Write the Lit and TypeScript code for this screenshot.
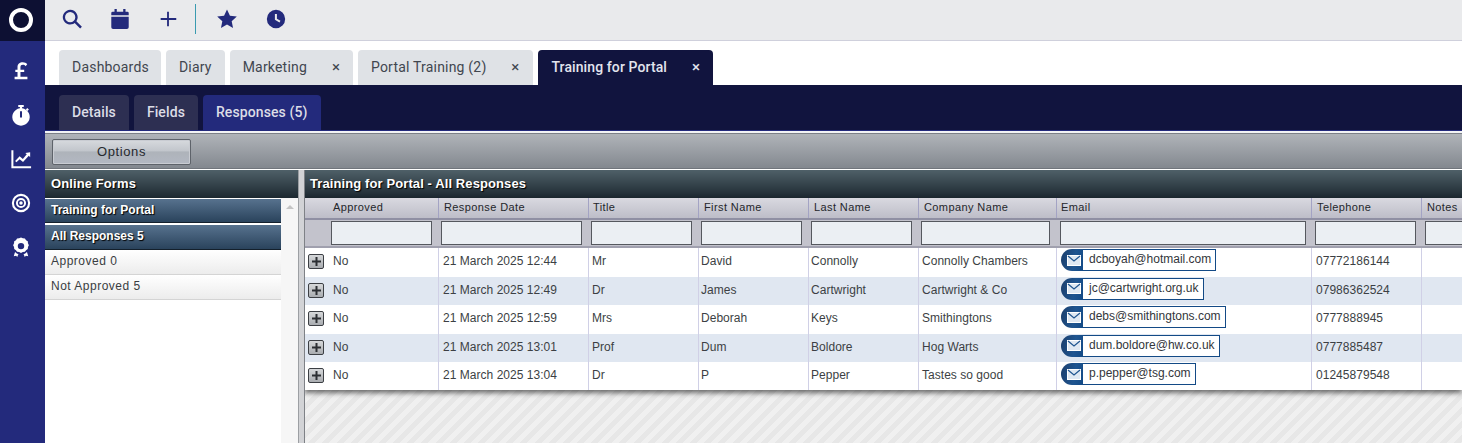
import { LitElement, html, css, svg, unsafeCSS } from "lit";
import { customElement } from "lit/decorators.js";

const cols = [134, 150, 110, 110, 110, 138, 255, 110, 60];
const heads = ["Approved", "Response Date", "Title", "First Name", "Last Name", "Company Name", "Email", "Telephone", "Notes"];
const rows = [
  ["No", "21 March 2025 12:44", "Mr", "David", "Connolly", "Connolly Chambers", "dcboyah@hotmail.com", "07772186144"],
  ["No", "21 March 2025 12:49", "Dr", "James", "Cartwright", "Cartwright & Co", "jc@cartwright.org.uk", "07986362524"],
  ["No", "21 March 2025 12:59", "Mrs", "Deborah", "Keys", "Smithingtons", "debs@smithingtons.com", "0777888945"],
  ["No", "21 March 2025 13:01", "Prof", "Dum", "Boldore", "Hog Warts", "dum.boldore@hw.co.uk", "0777885487"],
  ["No", "21 March 2025 13:04", "Dr", "P", "Pepper", "Tastes so good", "p.pepper@tsg.com", "01245879548"],
];
const gridCols = unsafeCSS(cols.map((c) => c + "px").join(" "));

@customElement("app-root")
export class AppRoot extends LitElement {
  static styles = css`
    :host { display: block; width: 1462px; height: 443px; overflow: hidden; font-family: Roboto, sans-serif; background: #fff; }
    .app { display: flex; height: 443px; }
    .side { width: 45px; flex: none; background: #232a7c; display: flex; flex-direction: column; }
    .logo { width: 45px; height: 41px; box-sizing: border-box; padding: 0 3px 2px 0; background: #0d1033; display: flex; align-items: center; justify-content: center; }
    .ring { width: 24px; height: 24px; box-sizing: border-box; border: 4.5px solid #fff; border-radius: 50%; }
    .nav { display: flex; flex-direction: column; align-items: center; gap: 22px; padding: 19px 4px 0 0; }
    .nav svg { display: block; width: 22px; height: 22px; fill: #fff; }
    .main { flex: 1; min-width: 0; display: flex; flex-direction: column; overflow: hidden; }
    .top { height: 41px; box-sizing: border-box; background: #e9eaec; border-bottom: 1px solid #cfd0dc; display: flex; align-items: center; flex: none; padding-bottom: 2px; }
    .top svg { display: block; width: 22px; height: 22px; fill: #232a7c; }
    .tool { width: 22px; height: 22px; margin-left: 16px; }
    .tool + .tool { margin-left: 26px; }
    .vr { width: 1px; height: 30px; background: #3a9bb0; margin: 0 20px 0 16px; }
    .vr + .tool { margin-left: 0; }
    .tool.late { margin-left: 27px; }
    .tabs { height: 44px; flex: none; display: flex; align-items: flex-end; gap: 5px; padding-left: 14px; }
    .tab { height: 35px; box-sizing: border-box; padding: 0 13px; background: #dfe2e6; border-radius: 4px 4px 0 0; color: #41464f; font-size: 14px; line-height: 34px; display: flex; letter-spacing: 0.2px; }
    .tab.plain { padding-right: 12px; }
    .tab .x { margin-left: 24px; font-size: 15px; width: 10px; text-align: center; }
    .tab.on { background: #11143e; color: #e3e5ee; font-weight: 500; letter-spacing: 0.1px; padding-right: 12px; }
    .band { height: 46px; box-sizing: border-box; flex: none; background: #11143e; border-bottom: 1px solid #232a7c; display: flex; align-items: flex-end; gap: 5px; padding-left: 14px; }
    .sub { height: 35px; padding: 0 13px; background: #2d2f52; border-radius: 4px 4px 0 0; color: #dcdde6; font-size: 14px; font-weight: 500; line-height: 34px; letter-spacing: 0.1px; }
    .sub.on { background: #232a7c; padding-right: 14px; }
    .bar { height: 38px; flex: none; border-top: 2px solid #f2f3f5; box-sizing: border-box; background: linear-gradient(#b1b5ba, #83888f); border-bottom: 1px solid #70757c; padding: 6px 0 0 7px; margin-bottom: 1px; box-shadow: inset 0 1px 0 #7c8087; }
    .btn { width: 139px; height: 26px; box-sizing: border-box; border: 1px solid #5e636a; border-radius: 2px; background: linear-gradient(#d7dade 0, #c2c6cc 45%, #aeb3ba 50%, #b3b8c2 100%); font: 13px/23px "Liberation Sans", Arial, sans-serif; color: #26292e; text-align: center; letter-spacing: 0.6px; box-shadow: inset 0 0 0 1px #c9ccd2; }
    .work { flex: 1; min-height: 0; display: flex; }
    .left { width: 253px; flex: none; display: flex; flex-direction: column; background: #fff; }
    .ptitle { height: 28px; flex: none; box-sizing: border-box; background: linear-gradient(#4f6068, #1c2830); color: #fff; font: bold 13px/27px "Liberation Sans", Arial, sans-serif; padding-left: 6px; text-shadow: 1px 1px 1px #000; letter-spacing: 0.1px; white-space: nowrap; }
    .right .ptitle { padding-left: 5px; }
    .lbody { flex: 1; display: flex; min-height: 0; }
    .list { width: 236px; flex: none; font: 12px/22px "Liberation Sans", Arial, sans-serif; padding-top: 1px; }
    .grp { height: 23px; background: linear-gradient(#57728e, #2a435c); border-bottom: 1px solid #14202c; color: #fff; font-weight: bold; padding-left: 6px; text-shadow: 1px 1px 1px #000; margin-bottom: 2px; }
    .grp + .grp { height: 24px; margin-bottom: 0; }
    .item { height: 25px; box-sizing: border-box; padding-left: 6px; color: #3a3d42; background: linear-gradient(#fff, #ececec); border-bottom: 1px solid #d4d4d4; letter-spacing: 0.5px; }
    .sb { width: 17px; flex: none; background: #f6f6f6; display: flex; justify-content: center; padding-top: 7px; box-sizing: border-box; }
    .sb i { display: block; width: 0; height: 0; border: 4px solid transparent; border-top: 0; border-bottom: 4px solid #c4c4c4; }
    .split { width: 7px; flex: none; background: #d2d3d6; border-left: 1px solid #9c9fa3; border-right: 1px solid #7e8186; box-sizing: border-box; }
    .right { flex: 1; min-width: 0; display: flex; flex-direction: column; overflow: hidden; background-color: #ececec; background-image: repeating-linear-gradient(135deg, #f0f0f0 0 5px, #e7e7e7 5px 10px); }
    .head, .filter, .row { display: grid; grid-template-columns: ${gridCols}; }
    .head { height: 22px; flex: none; box-sizing: border-box; background: linear-gradient(#d9d9e0, #bdbdc8); border-bottom: 2px solid #8f8fa3; font: 11px/19px "Liberation Sans", Arial, sans-serif; color: #24262b; letter-spacing: 0.4px; }
    .head div { padding-left: 5px; border-right: 1px solid #a3a3c4; white-space: nowrap; }
    .head div:first-child { padding-left: 28px; }
    .head div:nth-child(3), .head div:nth-child(7) { padding-left: 4px; }
    .filter { height: 28px; flex: none; box-sizing: border-box; background: #c3c3cc; border-bottom: 2px solid #a0a0ae; }
    .filter div { padding: 1px 7px 0 2px; }
    .filter div:first-child { padding-left: 26px; }
    .filter div:nth-child(n + 7) { padding: 1px 6px 0 3px; }
    .filter span { display: block; height: 24px; box-sizing: border-box; border: 1px solid #55585e; background: #ebeff3; }
    .grid { box-shadow: 0 3px 5px rgba(0, 0, 0, 0.55); flex: none; background: #fff; }
    .row { height: 28.5px; font: 12px/26px "Liberation Sans", Arial, sans-serif; color: #3c3f44; background: #fff; letter-spacing: 0.03px; }
    .row:last-child { height: 28px; }
    .row.alt { background: #e0e7f1; }
    .row > div { padding-left: 3px; border-right: 1px solid #d0d0e6; white-space: nowrap; overflow: hidden; display: flex; }
    .row > div:nth-child(2), .row > div:nth-child(7), .row > div:nth-child(8) { padding-left: 4px; }
    .row > div:nth-child(4), .row > div:nth-child(5) { padding-left: 2px; }
    .plus { width: 16px; height: 15px; box-sizing: border-box; margin: 6px 9px 0 0; border: 1px solid #3c3f44; border-radius: 2px; background: linear-gradient(#d6d8da, #a9acb0); display: flex; align-items: center; justify-content: center; }
    .plus svg { display: block; width: 9px; height: 9px; fill: #2c2f33; }
    .mail { display: flex; height: 22px; margin-top: 1px; align-self: flex-start; }
    .pill { width: 22px; height: 22px; box-sizing: border-box; background: linear-gradient(100deg, #1b3e6c, #1f5590 60%, #134a86); border-radius: 11px 0 0 11px; display: flex; align-items: center; justify-content: center; padding-left: 3px; }
    .pill svg { display: block; width: 14px; height: 11px; }
    .addr { height: 22px; box-sizing: border-box; border: 1px solid #134a86; border-left: 0; background: #fff; padding: 0 4px 0 6px; line-height: 18px; color: #33363b; letter-spacing: 0; }
  `;

  icon(d: unknown) {
    return html`<svg viewBox="0 0 24 24">${d}</svg>`;
  }

  render() {
    const tools = [
      svg`<path d="M10 2a8 8 0 1 0 4.900 14.300l6 6 1.900-1.900-6-6A8 8 0 0 0 10 2zm0 2.400a5.600 5.600 0 1 1 0 11.200 5.600 5.600 0 0 1 0-11.200z"/>`,
      svg`<path d="M6 1h2.500v3h7V1H18v3h2a1.500 1.500 0 0 1 1.500 1.500V8h-19V5.500A1.500 1.500 0 0 1 4 4h2zM2.500 9.500h19V21a2 2 0 0 1-2 2h-15a2 2 0 0 1-2-2z"/>`,
      svg`<path d="M11 4h2v7h8v2h-8v7h-2v-7H4v-2h7z"/>`,
    ];
    const tools2 = [
      svg`<path d="M12 1.500l3.200 6.900 7.500.9-5.600 5.100 1.500 7.400L12 18.100l-6.600 3.700 1.500-7.400-5.600-5.100 7.500-.9z"/>`,
      svg`<path fill-rule="evenodd" d="M12 2a10 10 0 1 1 0 20 10 10 0 0 1 0-20zm-1.200 4.500v6.300l5 3 1.100-1.800-3.900-2.300V6.500z"/>`,
    ];
    const nav = [
      svg`<path d="M14 2.500C10.500 2.500 8.200 4.600 8.200 7.800V10.500H5.800V13H8.200V18.200H5V21H19V18.200H11.400V13H15.500V10.500H11.400V7.800C11.400 6.200 12.400 5.300 14 5.300 15.200 5.300 16.300 5.900 17 6.700L18.800 4.500C17.600 3.300 16 2.500 14 2.500z"/>`,
      svg`<path fill-rule="evenodd" d="M9 1h6v2.200h-1.800v1.500a9.500 9.500 0 1 1-2.400 0V3.200H9zM18.800 4.400l1.800 1.700-1.500 1.600-1.800-1.700zM10.900 8v6.300l1.100 1.100 1.100-1.100V8z"/>`,
      svg`<path d="M1.500 2.500h2.200v17.300H23V22H1.500zM7 15.500l-1.400-1.400L10.500 9l3.500 3 4.300-5.300-1.600-1.300L22 4.500V10l-1.500-1.600-6.300 7-3.700-3.200z"/>`,
      svg`<path fill-rule="evenodd" d="M12 2a10 10 0 1 1 0 20 10 10 0 0 1 0-20zm0 2.300a7.700 7.700 0 1 0 0 15.400 7.700 7.700 0 0 0 0-15.400zm0 2.200a5.500 5.500 0 1 1 0 11 5.500 5.500 0 0 1 0-11zm0 2.100a3.400 3.400 0 1 0 0 6.800 3.400 3.400 0 0 0 0-6.800zm0 1.500a1.900 1.900 0 1 1 0 3.800 1.900 1.900 0 0 1 0-3.800z"/>`,
      svg`<path fill-rule="evenodd" d="M12 1.500l2 1 2.300.2 1.200 1.800 1.900 1.200.2 2.300 1 2-1 2-.2 2.300-1.900 1.200-1.200 1.800-2.300.2-2 1-2-1-2.300-.2-1.200-1.800-1.900-1.200-.2-2.300-1-2 1-2 .2-2.300 1.900-1.200 1.200-1.800 2.300-.2zm0 6a3.500 3.500 0 1 0 0 7 3.500 3.500 0 0 0 0-7z"/><path d="M5.500 17.500l2.200 1.900 1.500.2-1.300 3.400-1.200-1.500-2.600.5zM18.500 17.500l-2.200 1.900-1.500.2 1.300 3.400 1.200-1.500 2.600.5z"/>`,
    ];
    return html`<div class="app">
      <aside class="side">
        <div class="logo"><div class="ring"></div></div>
        <nav class="nav">${nav.map((n) => this.icon(n))}</nav>
      </aside>
      <div class="main">
        <div class="top">
          ${tools.map((t) => html`<div class="tool">${this.icon(t)}</div>`)}
          <div class="vr"></div>
          ${tools2.map((t, i) => html`<div class="tool ${i ? "late" : ""}">${this.icon(t)}</div>`)}
        </div>
        <div class="tabs">
          <div class="tab plain">Dashboards</div>
          <div class="tab">Diary</div>
          <div class="tab plain">Marketing<span class="x">×</span></div>
          <div class="tab">Portal Training (2)<span class="x">×</span></div>
          <div class="tab on">Training for Portal<span class="x">×</span></div>
        </div>
        <div class="band">
          <div class="sub">Details</div>
          <div class="sub">Fields</div>
          <div class="sub on">Responses (5)</div>
        </div>
        <div class="bar"><div class="btn">Options</div></div>
        <div class="work">
          <div class="left">
            <div class="ptitle">Online Forms</div>
            <div class="lbody">
              <div class="list">
                <div class="grp">Training for Portal</div>
                <div class="grp">All Responses 5</div>
                <div class="item">Approved 0</div>
                <div class="item">Not Approved 5</div>
              </div>
              <div class="sb"><i></i></div>
            </div>
          </div>
          <div class="split"></div>
          <div class="right">
            <div class="ptitle">Training for Portal - All Responses</div>
            <div class="grid">
              <div class="head">${heads.map((h) => html`<div>${h}</div>`)}</div>
              <div class="filter">${heads.map(() => html`<div><span></span></div>`)}</div>
              ${rows.map(
                (r, i) => html`<div class="row ${i % 2 ? "alt" : ""}">
                  ${r.map((c, j) =>
                    j === 0
                      ? html`<div><span class="plus"><svg viewBox="0 0 9 9"><path d="M3.500 0h2v3.500H9v2H5.500V9h-2V5.500H0v-2h3.500z"/></svg></span>${c}</div>`
                      : j === 6
                        ? html`<div><span class="mail"><span class="pill"><svg viewBox="0 0 14 11"><rect x=".5" y=".5" width="13" height="10" fill="#dfe8f2" stroke="#fff"/><path d="M1 1l6 5 6-5" fill="none" stroke="#1f5590" stroke-width="1.200"/></svg></span><span class="addr">${c}</span></span></div>`
                        : html`<div>${c}</div>`,
                  )}
                  <div></div>
                </div>`,
              )}
            </div>
          </div>
        </div>
      </div>
    </div>`;
  }
}
